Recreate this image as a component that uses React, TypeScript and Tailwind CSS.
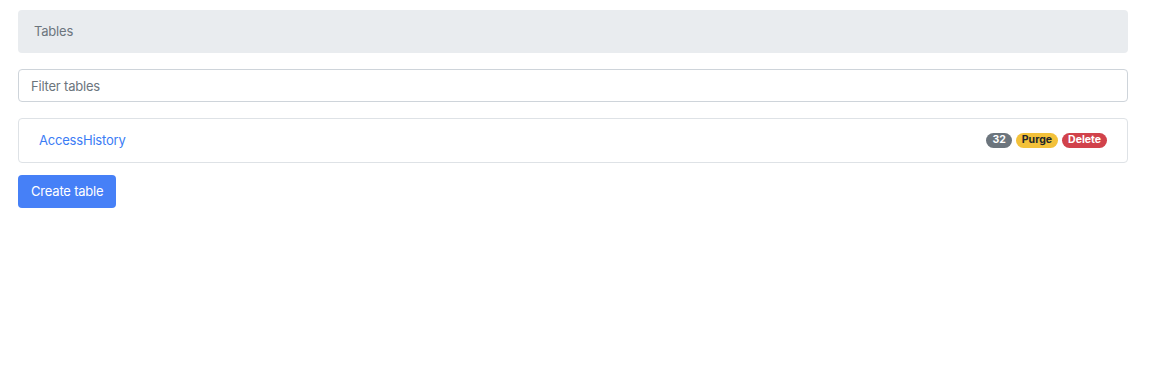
export default function App() {
  return (
    <div className="min-h-screen bg-white pl-[18px] pr-[23px] pt-[10px] font-['Inter',sans-serif] text-[13px] tracking-[-0.2px]">
      <nav className="h-[43px] flex items-center px-4 rounded bg-[#e9ecef] text-[#6c757d]">
        Tables
      </nav>

      <input
        className="mt-[16px] block w-full h-[33px] px-3 rounded border border-[#ced4da] text-[#212529] placeholder:text-[#6c757d] outline-none tracking-[-0.2px]"
        placeholder="Filter tables"
      />

      <ul className="mt-[16px] border border-[#dee2e6] rounded">
        <li className="h-[43px] flex items-center justify-between pl-5 pr-5">
          <a href="#" className="text-[#3b7cf5]">AccessHistory</a>
          <div className="flex items-center gap-1 text-[10.5px] font-bold leading-none tracking-normal">
            <span className="px-[6px] py-[2.5px] rounded-full bg-[#6c757d] text-white">32</span>
            <span className="px-[6px] py-[2.5px] rounded-full bg-[#f3c13a] text-[#212529]">Purge</span>
            <span className="px-[6px] py-[2.5px] rounded-full bg-[#d1424b] text-white">Delete</span>
          </div>
        </li>
      </ul>

      <button className="mt-3 h-[33px] px-[13px] rounded bg-[#4680f7] text-white tracking-[-0.2px]">
        Create table
      </button>
    </div>
  )
}
